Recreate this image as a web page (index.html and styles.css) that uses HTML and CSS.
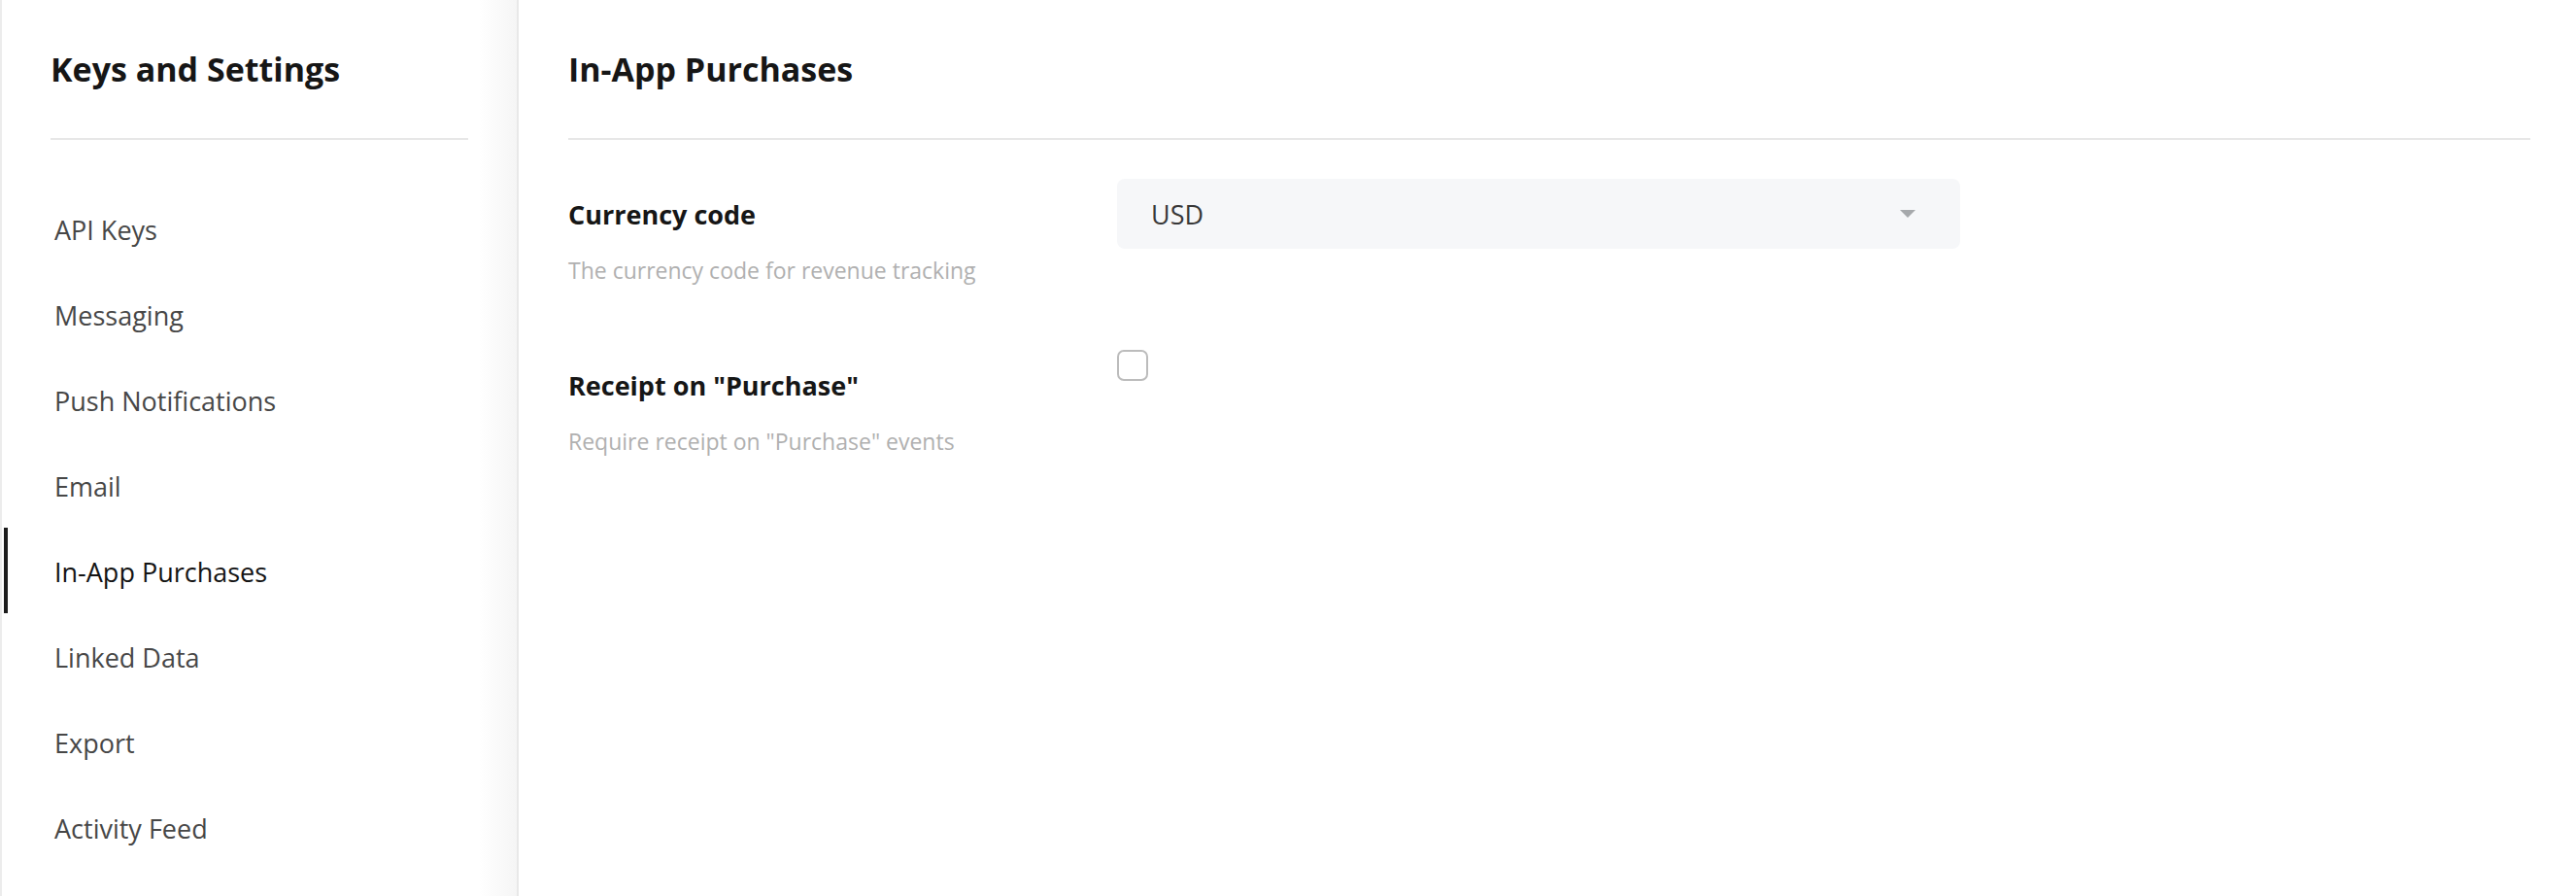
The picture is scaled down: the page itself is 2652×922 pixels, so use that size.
FILE: index.html
```html
<!DOCTYPE html>
<html lang="en">
<head>
<meta charset="utf-8">
<title>Keys and Settings</title>
<link rel="stylesheet" href="styles.css">
</head>
<body>
<div class="app">
  <aside class="sidebar">
    <div class="sidebar-head">
      <h1 class="sidebar-title">Keys and Settings</h1>
    </div>
    <nav class="nav">
      <a class="nav-item">API Keys</a>
      <a class="nav-item">Messaging</a>
      <a class="nav-item">Push Notifications</a>
      <a class="nav-item">Email</a>
      <a class="nav-item active">In-App Purchases</a>
      <a class="nav-item">Linked Data</a>
      <a class="nav-item">Export</a>
      <a class="nav-item">Activity Feed</a>
    </nav>
  </aside>
  <main class="main">
    <div class="main-head">
      <h2 class="main-title">In-App Purchases</h2>
    </div>
    <div class="setting">
      <div class="setting-text">
        <div class="setting-label">Currency code</div>
        <div class="setting-desc">The currency code for revenue tracking</div>
      </div>
      <div class="setting-control">
        <div class="select">
          <span class="select-value">USD</span>
          <span class="select-arrow"></span>
        </div>
      </div>
    </div>
    <div class="setting">
      <div class="setting-text">
        <div class="setting-label">Receipt on "Purchase"</div>
        <div class="setting-desc">Require receipt on "Purchase" events</div>
      </div>
      <div class="setting-control">
        <span class="checkbox"></span>
      </div>
    </div>
  </main>
</div>
</body>
</html>
```
FILE: styles.css
```css
* { box-sizing: border-box; }
html, body {
  margin: 0;
  padding: 0;
  background: #ffffff;
  font-family: "Open Sans", "Noto Sans", sans-serif;
  color: #222;
}
.app {
  display: flex;
  min-height: 922px;
}
.sidebar {
  width: 534px;
  flex: 0 0 534px;
  border-left: 2px solid #ececec;
  border-right: 2px solid #e8e8e8;
  background: linear-gradient(to right, #ffffff calc(100% - 38px), #f5f5f5 100%);
}
.sidebar-head {
  margin: 0 50px 0 50px;
  padding-top: 49px;
  padding-bottom: 49px;
  border-bottom: 2px solid #e7e7e7;
}
.sidebar-title, .main-title {
  margin: 0;
  font-size: 34px;
  line-height: 44px;
  font-weight: 700;
  color: #161616;
}
.nav {
  display: flex;
  flex-direction: column;
  padding-top: 47px;
}
.nav-item {
  display: block;
  height: 88px;
  padding-top: 3px;
  line-height: 85px;
  font-size: 27px;
  color: #474747;
  border-left: 4px solid transparent;
  margin-left: 2px;
  padding-left: 48px;
}
.nav-item.active {
  color: #141414;
  border-left-color: #1c1c1c;
}
.main {
  flex: 1;
  padding: 0 47px 0 51px;
}
.main-head {
  padding-top: 49px;
  padding-bottom: 49px;
  border-bottom: 2px solid #e7e7e7;
  margin-bottom: 40px;
}
.setting {
  display: grid;
  grid-template-columns: 565px 868px;
  height: 176px;
}
.setting-text {
  padding-top: 19px;
}
.setting-label {
  font-size: 27px;
  line-height: 36px;
  font-weight: 700;
  color: #161616;
}
.setting-desc {
  margin-top: 23px;
  font-size: 23px;
  line-height: 32px;
  color: #b0b0b0;
}
.select {
  display: flex;
  align-items: center;
  justify-content: space-between;
  height: 72px;
  padding: 0 46px 0 35px;
  background: #f6f7f9;
  border-radius: 8px;
}
.select-value {
  font-size: 27px;
  color: #383838;
}
.select-arrow {
  width: 0;
  height: 0;
  border-left: 8px solid transparent;
  border-right: 8px solid transparent;
  border-top: 8px solid #a6a9ac;
}
.checkbox {
  display: block;
  width: 32px;
  height: 32px;
  border: 2px solid #bcbcbc;
  border-radius: 7px;
  background: #fff;
}
```
